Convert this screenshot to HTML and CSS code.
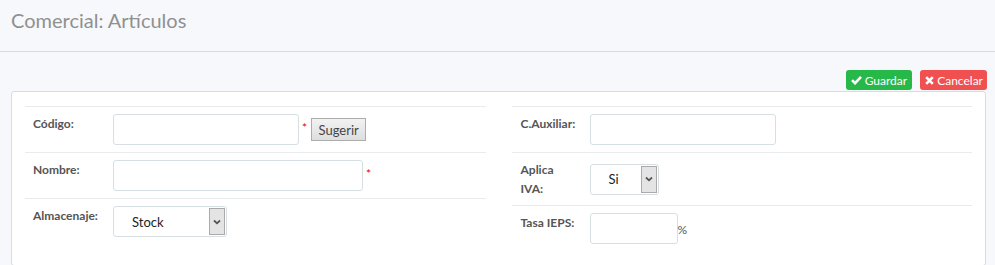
FILE: index.html
```html
<!DOCTYPE html>
<html lang="es">

<head>
    <meta charset="UTF-8">
    <title>Comercial: Artículos</title>
    <link rel="stylesheet" href="styles.css">
</head>

<body>
    <!-- cabecera -->
    <div class="page-header">
        <h1>Comercial: Artículos</h1>
    </div>

    <div class="content">
        <div class="toolbar">
            <a href="#" class="btn btn-green">
                <svg width="11" height="10" viewBox="0 0 11 10"><path d="M1 5.2 L4 8.2 L10 1.8" fill="none" stroke="#fff" stroke-width="2.6"/></svg>
                Guardar
            </a>
            <a href="#" class="btn btn-red">
                <svg width="9" height="9" viewBox="0 0 9 9"><path d="M1.2 1.2 L7.8 7.8 M7.8 1.2 L1.2 7.8" fill="none" stroke="#fff" stroke-width="2.6"/></svg>
                Cancelar
            </a>
        </div>

        <div class="panel">
            <div class="col">
                <div class="row">
                    <label class="lbl">Código:</label>
                    <div class="ctrl">
                        <input type="text" class="inp w186">
                        <span class="req">*</span>
                        <button class="btn-sug">Sugerir</button>
                    </div>
                </div>
                <div class="row">
                    <label class="lbl">Nombre:</label>
                    <div class="ctrl">
                        <input type="text" class="inp w250">
                        <span class="req">*</span>
                    </div>
                </div>
                <div class="row">
                    <label class="lbl">Almacenaje:</label>
                    <div class="ctrl">
                        <div class="sel w114">
                            <span class="sel-text">Stock</span>
                            <span class="sel-arrow"><svg width="8" height="6" viewBox="0 0 8 6"><path d="M1 1.5 L4 4.3 L7 1.5" fill="none" stroke="#555" stroke-width="1.8"/></svg></span>
                        </div>
                    </div>
                </div>
            </div>

            <div class="col right">
                <div class="row">
                    <label class="lbl">C.Auxiliar:</label>
                    <div class="ctrl">
                        <input type="text" class="inp w186">
                    </div>
                </div>
                <div class="row">
                    <label class="lbl">Aplica<br>IVA:</label>
                    <div class="ctrl">
                        <div class="sel w69">
                            <span class="sel-text">Si</span>
                            <span class="sel-arrow"><svg width="8" height="6" viewBox="0 0 8 6"><path d="M1 1.5 L4 4.3 L7 1.5" fill="none" stroke="#555" stroke-width="1.8"/></svg></span>
                        </div>
                    </div>
                </div>
                <div class="row">
                    <label class="lbl">Tasa IEPS:</label>
                    <div class="ctrl">
                        <input type="text" class="inp w88">
                        <span class="pct">%</span>
                    </div>
                </div>
            </div>
        </div>
    </div>
</body>

</html>
```

FILE: styles.css
```css
* {
    margin: 0;
    padding: 0;
    box-sizing: border-box;
}

body {
    background-color: #f6f8fb;
    font-family: Lato, "Open Sans", sans-serif;
    color: #333;
    overflow: hidden;
}

.page-header {
    height: 52px;
    border-bottom: 1px solid #d3dbe3;
    padding: 7px 0 0 11px;
}

.page-header h1 {
    font-size: 20px;
    font-weight: normal;
    line-height: 26px;
    color: #909090;
}

.content {
    padding: 18px 8px 0 11px;
}

.toolbar {
    display: flex;
    justify-content: flex-end;
    gap: 8px;
    margin-bottom: 1px;
}

.btn {
    display: flex;
    align-items: center;
    gap: 3px;
    height: 20px;
    padding: 0 5px;
    border-radius: 3px;
    color: #fff;
    font-size: 12px;
    text-decoration: none;
}

.btn-green {
    background-color: #27b84a;
}

.btn-red {
    padding: 0 4px 0 5px;
    background-color: #f05050;
}

.panel {
    display: grid;
    grid-template-columns: 1fr 1fr;
    column-gap: 26px;
    height: 175px;
    margin-right: 1px;
    padding: 14px 13px 0 13px;
    background-color: #fff;
    border: 1px solid #d5dde5;
    border-radius: 3px;
}

.row {
    display: flex;
    align-items: center;
    padding: 7px 0 7px 8px;
    border-top: 1px solid #e8ebee;
}

.lbl {
    align-self: flex-start;
    width: 80px;
    font-size: 12px;
    font-weight: bold;
    line-height: 19px;
    color: #555;
}

.right .row {
    padding-left: 9px;
}

.right .lbl {
    width: 69px;
}

.ctrl {
    display: flex;
    align-items: center;
}

.inp {
    height: 31px;
    border: 1px solid #d6dfe2;
    border-radius: 3px;
    background-color: #fff;
}

.w186 {
    width: 186px;
}

.w250 {
    width: 250px;
}

.w88 {
    width: 88px;
}

.req {
    margin: -4px 0 0 3px;
    color: #e00;
    font-size: 12px;
}

.btn-sug {
    width: 55px;
    height: 23px;
    margin-left: 4px;
    border: 1px solid #adadad;
    background: linear-gradient(#f2f2f2, #dedede);
    font-family: Lato, sans-serif;
    font-size: 13px;
    color: #444;
}

.sel {
    position: relative;
    display: flex;
    align-items: center;
    height: 31px;
    border: 1px solid #d6dfe2;
    border-radius: 3px;
    background-color: #fff;
    font-size: 13px;
    color: #222;
}

.w114 {
    width: 114px;
}

.w69 {
    width: 69px;
}

.sel-text {
    padding-left: 18px;
}

.sel-arrow {
    position: absolute;
    top: 1px;
    right: 1px;
    bottom: 1px;
    width: 16px;
    display: flex;
    align-items: center;
    justify-content: center;
    background-color: #e4e4e4;
    border: 1px solid #aaa;
}

.pct {
    margin-top: 1px;
    font-size: 12px;
    color: #555;
}
```
